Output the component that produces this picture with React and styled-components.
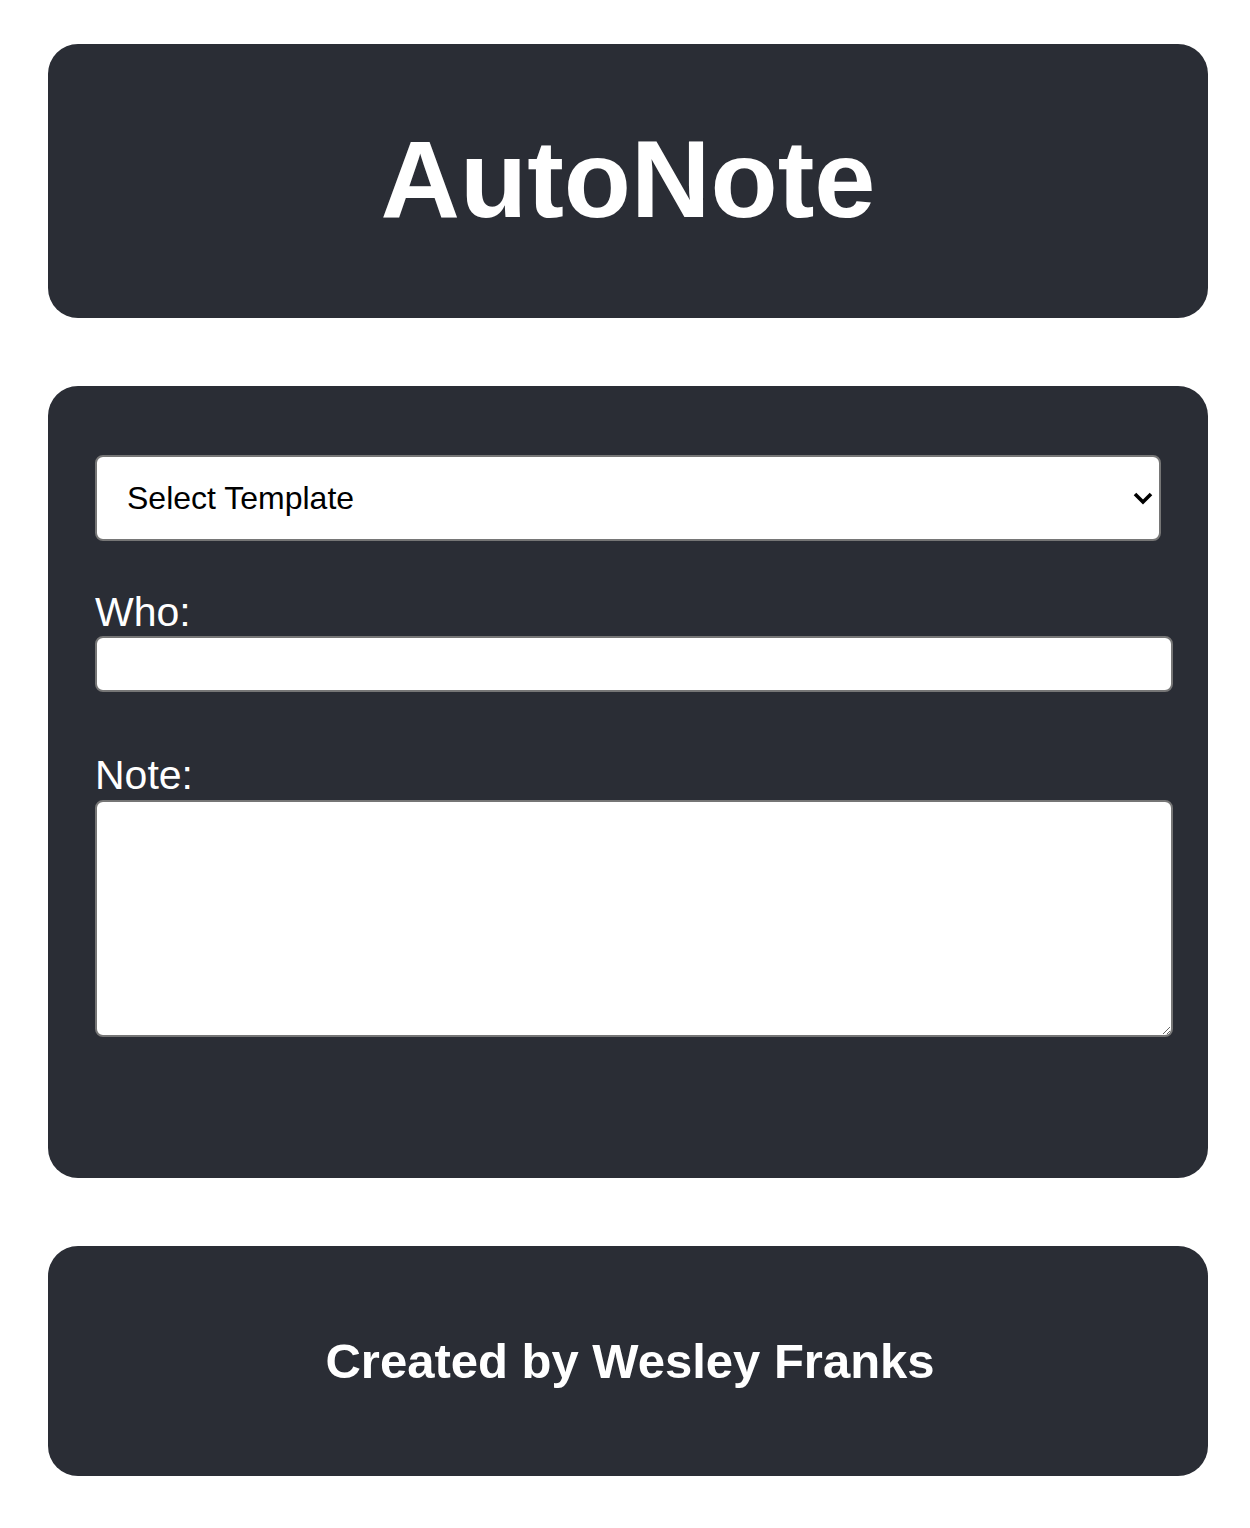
import React, { useState } from 'react';
import styled, { createGlobalStyle } from 'styled-components';

const GlobalStyle = createGlobalStyle`
  body {
    margin: 0;
    background-color: #fff;
    font-family: "Liberation Sans", Arial, Helvetica, sans-serif;
  }
`;

const Page = styled.div`
  display: flex;
  flex-direction: column;
  gap: 68px;
  padding: 44px 42px 52px 48px;
`;

const Card = styled.div`
  background-color: #2a2d35;
  border-radius: 30px;
  color: #fff;
`;

const HeaderCard = styled(Card)`
  min-height: 274px;
  display: flex;
  align-items: center;
  justify-content: center;
`;

const Title = styled.h1`
  margin: 0 0 6px;
  font-size: 110px;
  font-weight: 700;
`;

const FormCard = styled(Card)`
  display: flex;
  flex-direction: column;
  padding: 69px 47px 141px 47px;
`;

const SelectWrap = styled.div`
  position: relative;
  width: 1066px;
`;

const Select = styled.select`
  appearance: none;
  box-sizing: border-box;
  width: 100%;
  height: 86px;
  padding: 0 30px;
  font-family: inherit;
  font-size: 32px;
  color: #000;
  background: #fff;
  border: 2px solid #767676;
  border-radius: 8px;
`;

const Chevron = styled.svg`
  position: absolute;
  right: 8px;
  top: 36px;
  pointer-events: none;
`;

const Label = styled.label`
  display: block;
  font-size: 41px;
  line-height: 47px;
  margin-top: ${({ gap }) => gap}px;
`;

const Input = styled.input`
  box-sizing: border-box;
  width: 1078px;
  height: 56px;
  font-family: inherit;
  font-size: 24px;
  padding: 4px 10px;
  border: 2px solid #767676;
  border-radius: 8px;
  background: #fff;
`;

const TextArea = styled.textarea`
  box-sizing: border-box;
  display: block;
  width: 1078px;
  height: 237px;
  margin-top: 1px;
  font-family: inherit;
  font-size: 24px;
  padding: 8px 10px;
  border: 2px solid #767676;
  border-radius: 8px;
  background: #fff;
`;

const FooterCard = styled(Card)`
  min-height: 230px;
  display: flex;
  align-items: center;
  justify-content: center;
`;

const FooterText = styled.h2`
  margin: 0 0 0 4px;
  font-size: 49px;
  font-weight: 700;
`;

function App() {
  const [template, setTemplate] = useState('');
  const [who, setWho] = useState('');
  const [note, setNote] = useState('');

  return (
    <>
      <GlobalStyle />
      <Page>
        <HeaderCard>
          <Title>AutoNote</Title>
        </HeaderCard>
        <FormCard>
          <SelectWrap>
            <Select value={template} onChange={(e) => setTemplate(e.target.value)}>
              <option value="">Select Template</option>
            </Select>
            <Chevron width="20" height="14" viewBox="0 0 20 14">
              <path d="M2 3 L10 11 L18 3" fill="none" stroke="#000" strokeWidth="3.6" />
            </Chevron>
          </SelectWrap>
          <Label gap={48} htmlFor="who">Who:</Label>
          <Input id="who" value={who} onChange={(e) => setWho(e.target.value)} />
          <Label gap={60} htmlFor="note">Note:</Label>
          <TextArea id="note" value={note} onChange={(e) => setNote(e.target.value)} />
        </FormCard>
        <FooterCard>
          <FooterText>Created by Wesley Franks</FooterText>
        </FooterCard>
      </Page>
    </>
  );
}

export default App;
